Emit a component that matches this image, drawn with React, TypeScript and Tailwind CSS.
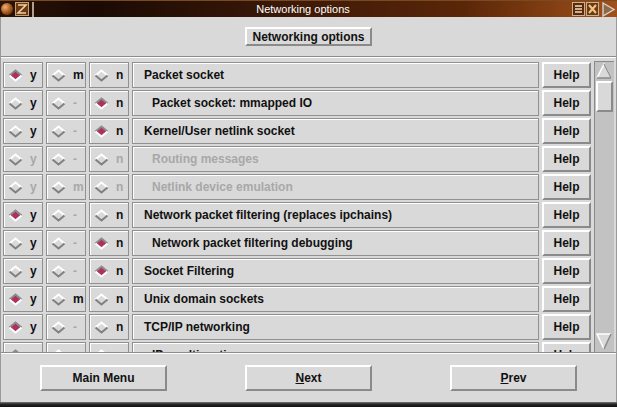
import React from 'react';

type Row = {
  sel: 'y' | 'n' | null;
  m: boolean;
  label: string;
  indent?: boolean;
  off?: boolean;
};

const rows: Row[] = [
  { sel: 'y', m: true, label: 'Packet socket' },
  { sel: 'n', m: false, label: 'Packet socket: mmapped IO', indent: true },
  { sel: 'n', m: false, label: 'Kernel/User netlink socket' },
  { sel: null, m: false, label: 'Routing messages', indent: true, off: true },
  { sel: null, m: true, label: 'Netlink device emulation', indent: true, off: true },
  { sel: 'y', m: false, label: 'Network packet filtering (replaces ipchains)' },
  { sel: 'n', m: false, label: 'Network packet filtering debugging', indent: true },
  { sel: 'n', m: false, label: 'Socket Filtering' },
  { sel: 'y', m: true, label: 'Unix domain sockets' },
  { sel: 'y', m: false, label: 'TCP/IP networking' },
  { sel: 'y', m: false, label: 'IP: multicasting', indent: true },
];

const Diamond = ({ on }: { on: boolean }) => (
  <svg width="15" height="13" viewBox="0 0 15 13" className="shrink-0">
    <polygon points="7.5,1.5 13.5,6.5 7.5,11.5 1.5,6.5" fill={on ? '#b03060' : '#d9d9d9'} />
    <polyline points="1.5,6.5 7.5,1.5 13.5,6.5" fill="none" stroke={on ? '#8a8a8a' : '#ffffff'} strokeWidth="2" />
    <polyline points="1.5,6.5 7.5,11.5 13.5,6.5" fill="none" stroke={on ? '#ffffff' : '#808080'} strokeWidth="2" />
  </svg>
);

const cell = "h-[26px] border border-[#909090] shadow-[inset_1px_1px_0_#ffffff] bg-[#d9d9d9]";
const raised = "border-t-2 border-l-2 border-b-2 border-r-2 border-t-white border-l-white border-b-[#8a8a8a] border-r-[#8a8a8a] bg-[#d9d9d9]";

const Choice = ({ on, letter, dim }: { on: boolean; letter: string; dim: boolean }) => (
  <div className={`${cell} w-[40px] flex items-center pl-[4px] gap-[7px]`}>
    <Diamond on={on} />
    <span className={`text-[12px] font-bold ${dim ? 'text-[#a8a8a8]' : 'text-[#111]'}`}>{letter}</span>
  </div>
);

export default function App() {
  return (
    <div className="w-[617px] h-[407px] flex flex-col bg-[#d9d9d9] overflow-hidden font-['Liberation_Sans',Arial,sans-serif]">
      {/* title bar */}
      <div className="h-[17px] flex items-center bg-[linear-gradient(to_right,#2a1206,#1a0a03_15%,#3a1808_45%,#5a2608_75%,#a0501a)] border-t border-[#7a4a22]">
        <div className="w-[12px] h-[12px] ml-[1px] rounded-full bg-[radial-gradient(circle_at_35%_35%,#f0b070,#a05018_55%,#3a1804)]" />
        <svg width="14" height="14" viewBox="0 0 14 14" className="ml-[2px]">
          <rect x="0.5" y="0.5" width="13" height="13" fill="#6a3a14" stroke="#c8a070" />
          <path d="M3 3 H11 L3 11 H11" fill="none" stroke="#f0d0a0" strokeWidth="1.6" />
        </svg>
        <div className="w-[2px] h-[15px] ml-[3px] bg-[#b0a090]" />
        <div className="flex-1 text-center text-white text-[11px] leading-none">Networking options</div>
        <svg width="13" height="14" viewBox="0 0 13 14">
          <rect x="0.5" y="0.5" width="12" height="13" fill="#5a2a0a" stroke="#c8b090" />
          <path d="M3 4 H10 M3 7 H10 M3 10 H10" stroke="#f0e0c0" strokeWidth="1.4" />
        </svg>
        <svg width="13" height="14" viewBox="0 0 13 14" className="ml-[1px]">
          <rect x="0.5" y="0.5" width="12" height="13" fill="#6a3a14" stroke="#c8b090" />
          <path d="M3 3 L10 11 M10 3 L3 11" stroke="#f0c080" strokeWidth="2.2" />
        </svg>
        <svg width="16" height="15" viewBox="0 0 16 15" className="ml-[1px] mr-[1px]">
          <path d="M3 1 L14 7.5 L3 14 Z" fill="#8a6a4a" stroke="#d8d0c8" strokeWidth="1.4" />
        </svg>
      </div>

      <div className="flex-1 flex flex-col border-l border-r border-[#9a9a9a]">
        {/* header */}
        <div className="h-[40px] shrink-0 flex items-center justify-center border-b border-[#8c8c8c]">
          <div className={`${raised} w-[127px] h-[19px] flex items-center justify-center text-[12px] font-bold text-[#111]`}>
            Networking options
          </div>
        </div>

        {/* option list */}
        <div className="h-[295px] shrink-0 flex overflow-hidden shadow-[inset_0_1px_0_#ffffff]">
          <div className="w-[590px] pl-[2px] pt-[5px] flex flex-col gap-[2px]">
            {rows.map((r, i) => (
              <div key={i} className="flex gap-[3px] shrink-0">
                <Choice on={r.sel === 'y'} letter="y" dim={!!r.off} />
                <Choice on={false} letter={r.m ? 'm' : '-'} dim={!!r.off || !r.m} />
                <Choice on={r.sel === 'n'} letter="n" dim={!!r.off} />
                <div
                  className={`${cell} flex-1 flex items-center text-[12px] font-bold ${r.indent ? 'pl-[19px]' : 'pl-[11px]'} ${r.off ? 'text-[#a8a8a8]' : 'text-[#111]'}`}
                >
                  {r.label}
                </div>
                <div className={`${raised} w-[49px] h-[26px] flex items-center justify-center text-[12px] font-bold text-[#111]`}>
                  Help
                </div>
              </div>
            ))}
          </div>

          {/* scrollbar */}
          <div className="ml-[3px] mt-[4px] w-[20px] flex flex-col border-t border-l border-[#8a8a8a] bg-[#c2c2c2] px-[1px] pt-[1px]">
            <svg width="16" height="16" viewBox="0 0 16 16">
              <path d="M8 1 L15 15 L1 15 Z" fill="#d9d9d9" />
              <path d="M1 15 L8 1 L15 15" fill="none" stroke="#ffffff" strokeWidth="1.5" />
              <path d="M1 15 H15" stroke="#8a8a8a" strokeWidth="1.5" />
              <path d="M8 1 L15 15" stroke="#8a8a8a" strokeWidth="1.2" />
            </svg>
            <div className={`${raised} h-[31px] mt-[2px]`} />
            <div className="flex-1" />
            <svg width="16" height="17" viewBox="0 0 16 17" className="mb-[2px]">
              <path d="M1 1 L15 1 L8 16 Z" fill="#d9d9d9" />
              <path d="M15 1 H1 L8 16" fill="none" stroke="#ffffff" strokeWidth="1.5" />
              <path d="M15 1 L8 16" stroke="#8a8a8a" strokeWidth="1.5" />
            </svg>
          </div>
        </div>

        {/* bottom buttons */}
        <div className="flex-1 flex justify-center gap-[78px] pt-[12px] border-t border-[#8c8c8c] shadow-[inset_0_1px_0_#ffffff]">
          <div className={`${raised} w-[127px] h-[26px] flex items-center justify-center text-[12px] font-bold text-[#111]`}>
            Main Menu
          </div>
          <div className={`${raised} w-[127px] h-[26px] flex items-center justify-center text-[12px] font-bold text-[#111]`}>
            <span><span className="underline">N</span>ext</span>
          </div>
          <div className={`${raised} w-[127px] h-[26px] flex items-center justify-center text-[12px] font-bold text-[#111]`}>
            <span><span className="underline">P</span>rev</span>
          </div>
        </div>
      </div>

      <div className="h-[5px] shrink-0 bg-[linear-gradient(to_bottom,#7a7a7a,#2a2a2a_40%,#101010)]" />
    </div>
  );
}
